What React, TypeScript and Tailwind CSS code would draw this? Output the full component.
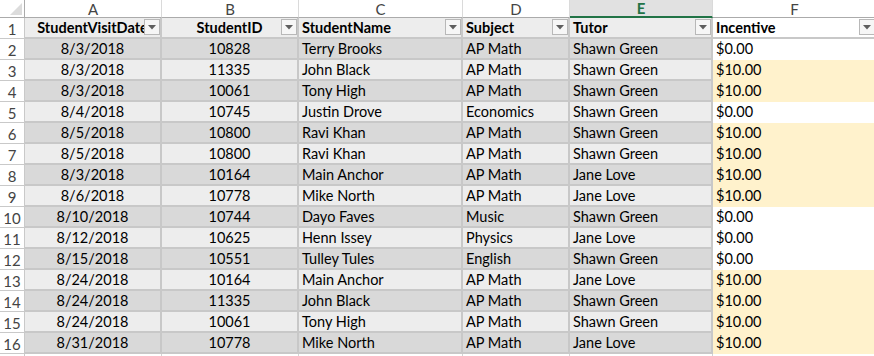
import React from "react";

const COLS = [
  { key: "A", w: "w-[137px]", align: "center" },
  { key: "B", w: "w-[137px]", align: "center" },
  { key: "C", w: "w-[164px]", align: "left" },
  { key: "D", w: "w-[107px]", align: "left" },
  { key: "E", w: "w-[143px]", align: "left" },
  { key: "F", w: "w-[164px]", align: "left" },
];

const HEADERS = ["StudentVisitDate", "StudentID", "StudentName", "Subject", "Tutor", "Incentive"];

const ROWS: string[][] = [
  ["8/3/2018", "10828", "Terry Brooks", "AP Math", "Shawn Green", "$0.00"],
  ["8/3/2018", "11335", "John Black", "AP Math", "Shawn Green", "$10.00"],
  ["8/3/2018", "10061", "Tony High", "AP Math", "Shawn Green", "$10.00"],
  ["8/4/2018", "10745", "Justin Drove", "Economics", "Shawn Green", "$0.00"],
  ["8/5/2018", "10800", "Ravi Khan", "AP Math", "Shawn Green", "$10.00"],
  ["8/5/2018", "10800", "Ravi Khan", "AP Math", "Shawn Green", "$10.00"],
  ["8/3/2018", "10164", "Main Anchor", "AP Math", "Jane Love", "$10.00"],
  ["8/6/2018", "10778", "Mike North", "AP Math", "Jane Love", "$10.00"],
  ["8/10/2018", "10744", "Dayo Faves", "Music", "Shawn Green", "$0.00"],
  ["8/12/2018", "10625", "Henn Issey", "Physics", "Jane Love", "$0.00"],
  ["8/15/2018", "10551", "Tulley Tules", "English", "Shawn Green", "$0.00"],
  ["8/24/2018", "10164", "Main Anchor", "AP Math", "Jane Love", "$10.00"],
  ["8/24/2018", "11335", "John Black", "AP Math", "Shawn Green", "$10.00"],
  ["8/24/2018", "10061", "Tony High", "AP Math", "Shawn Green", "$10.00"],
  ["8/31/2018", "10778", "Mike North", "AP Math", "Jane Love", "$10.00"],
];

function FilterButton() {
  return (
    <div className="absolute right-0 bottom-[2px] flex h-4 w-4 items-center justify-center border border-[#b8b8b8] bg-[#f6f6f6]">
      <svg width="8" height="5" viewBox="0 0 8 5">
        <path d="M0 0h8L4 4.5z" fill="#5e5e5e" />
      </svg>
    </div>
  );
}

function RowNum({ n }: { n?: number }) {
  return (
    <div className="flex h-[21px] w-[25px] shrink-0 items-center justify-center border-r border-b border-[#c9c9c9] bg-white pt-[2px] text-[15px] text-[#444]">
      {n}
    </div>
  );
}

export default function App() {
  return (
    <div className="h-[356px] w-[874px] overflow-hidden bg-white text-[14.5px] leading-none text-black [font-family:Lato,'Open_Sans',sans-serif]">
      {/* column letters */}
      <div className="flex h-[18px] text-[15px]">
        <div className="relative w-[25px] shrink-0 border-r border-b border-[#ababab] bg-white">
          <svg className="absolute right-[2px] bottom-[2px]" width="12" height="12" viewBox="0 0 12 12">
            <path d="M12 0v12H0z" fill="#dcdcdc" />
          </svg>
        </div>
        {COLS.map((c) =>
          c.key === "E" ? (
            <div
              key={c.key}
              className={`${c.w} flex shrink-0 items-center justify-center border-r border-b-2 border-r-[#dadada] border-b-[#217346] bg-[#e1e1e1] pt-[1px] font-bold text-[#217346]`}
            >
              {c.key}
            </div>
          ) : (
            <div
              key={c.key}
              className={`${c.w} flex shrink-0 items-center justify-center border-r border-b border-r-[#dadada] border-b-[#ababab] pt-[1px] text-[#444]`}
            >
              {c.key}
            </div>
          ),
        )}
      </div>

      {/* header row */}
      <div className="flex">
        <RowNum n={1} />
        {COLS.map((c, i) => (
          <div
            key={c.key}
            className={`${c.w} relative flex h-[21px] shrink-0 items-center border-r-2 border-b-2 border-[#c8c8c8] pt-[2px] font-bold ${
              c.key === "F" ? "bg-white" : "bg-[#ededed]"
            } ${c.align === "center" ? "justify-center" : "pl-[3px]"}`}
          >
            <span className="whitespace-nowrap">{HEADERS[i]}</span>
            <FilterButton />
          </div>
        ))}
      </div>

      {ROWS.map((row, r) => {
        const dark = r % 2 === 0;
        return (
          <div key={r} className="flex">
            <RowNum n={r + 2} />
            {COLS.map((c, i) => {
              const isF = c.key === "F";
              const bg = isF
                ? row[5] === "$0.00"
                  ? "bg-white border-b-[#ffffff]"
                  : "bg-[#fff2cc] border-b-[#fff2cc]"
                : dark
                  ? "bg-[#d9d9d9] border-b-[#c8c8c8]"
                  : "bg-[#ededed] border-b-[#c8c8c8]";
              return (
                <div
                  key={c.key}
                  className={`${c.w} flex h-[21px] shrink-0 items-center whitespace-nowrap border-b-2 pt-[2px] ${
                    isF ? "" : "border-r-2 border-r-[#c8c8c8]"
                  } ${bg} ${c.align === "center" ? "justify-center" : "pl-[3px]"}`}
                >
                  {row[i]}
                </div>
              );
            })}
          </div>
        );
      })}

      <div className="flex">
        <RowNum />
        {COLS.map((c) => (
          <div key={c.key} className={`${c.w} h-[21px] shrink-0 border-r border-b border-[#d4d4d4]`} />
        ))}
      </div>
    </div>
  );
}
